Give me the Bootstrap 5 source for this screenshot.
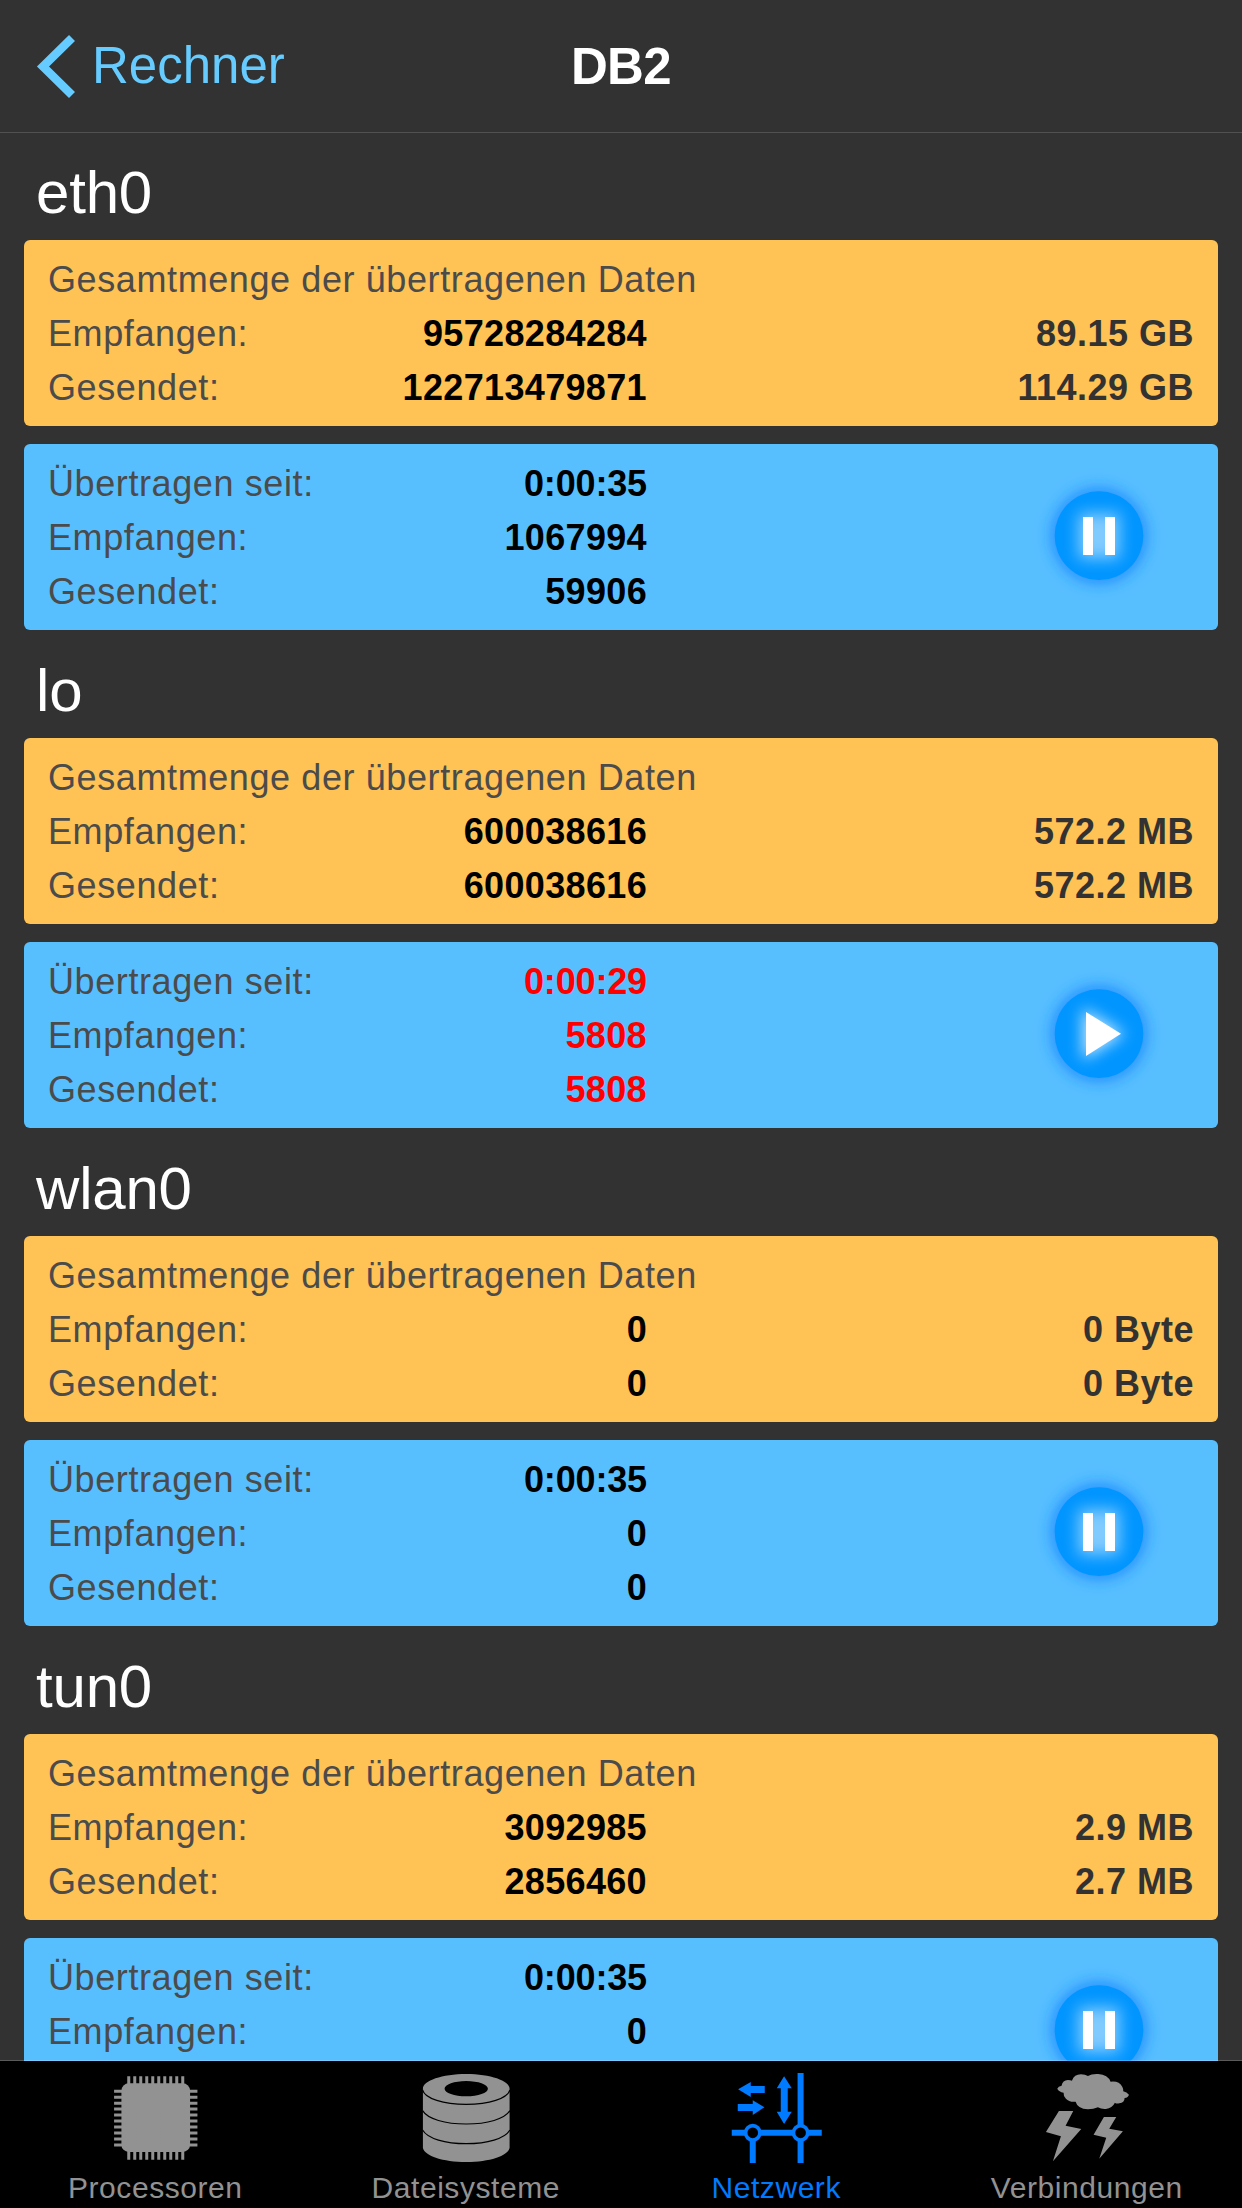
<!DOCTYPE html>
<html lang="de">
<head>
<meta charset="utf-8">
<meta name="viewport" content="width=device-width, initial-scale=1">
<title>DB2 – Netzwerk</title>
<link href="https://cdn.jsdelivr.net/npm/bootstrap@5.3.0/dist/css/bootstrap.min.css" rel="stylesheet">
<style>
html, body { height: 100%; }
body { background: #323232; color: #fff; font-family: "Liberation Sans", Arial, sans-serif; overflow: hidden; }
.topbar { height: 133px; padding: 0 36px; border-bottom: 1px solid #515151; font-size: 51px; line-height: 134px; }
.back-link { color: #66ccff; height: 132px; }
.back-link svg { width: 40px; height: 66px; margin-right: 16px; }
.back-text { letter-spacing: 0; }
.host-name { letter-spacing: -.6px; height: 132px; }
.iface-list { padding: 0 24px; min-height: 0; }
.iface-title { height: 108px; padding: 7px 0 0 12px; font-size: 60px; line-height: 107px; font-weight: 400; letter-spacing: -.2px; }
.iface:first-child .iface-title { height: 107px; padding-top: 6px; }
.panel { height: 186px; padding: 13px 24px 0; border: 0; border-radius: 6px; font-size: 36px; line-height: 54px; color: #4b4b4b; letter-spacing: .6px; }
.panel-total { background: #ffc254; margin-bottom: 18px; }
.panel-since { background: #58bfff; }
.num-col { width: 599px; }
.num-col b { color: #000; letter-spacing: .35px; }
.num-col b.clock { letter-spacing: -.15px; }
.panel .halted b { color: #ff0000; }
.human { color: #323232; font-weight: 700; letter-spacing: .5px; }
.toggle-icon { width: 140px; height: 130px; margin: 13px 24px 0 0; }
.tabs { position: relative; height: 147px; background: #000; box-shadow: 0 -1px 0 rgba(255, 255, 255, .2); color: #929292; font-size: 30px; line-height: 36px; letter-spacing: .55px; }
.tabs svg { width: 120px; height: 104px; display: block; fill: currentColor; }
.tab-active { color: #007aff; }
.tab-label { margin-top: 5px; }
</style>
</head>
<body class="d-flex flex-column">
<svg width="0" height="0" class="position-absolute" aria-hidden="true">
  <defs>
    <filter id="soft" x="-50%" y="-50%" width="200%" height="200%"><feGaussianBlur stdDeviation="24"/></filter>
    <filter id="shine" x="-100%" y="-100%" width="300%" height="300%"><feGaussianBlur stdDeviation="22"/></filter>
    <symbol id="pause" viewBox="0 0 420 390">
      <circle cx="207" cy="197" r="142" fill="#1e8cff" filter="url(#soft)"/>
      <circle cx="207" cy="197" r="133" fill="#0095ff"/>
      <path d="M145 130h124v136H145z" fill="#fff" opacity=".5" filter="url(#shine)"/>
      <path d="M159 141h30v114h-30zM225 141h30v114h-30z" fill="#fff"/>
    </symbol>
    <symbol id="play" viewBox="0 0 420 390">
      <circle cx="207" cy="197" r="142" fill="#1e8cff" filter="url(#soft)"/>
      <circle cx="207" cy="197" r="133" fill="#0095ff"/>
      <path d="M158 120L285 197L158 276z" fill="#fff" opacity=".75" filter="url(#shine)"/>
      <path d="M168 132L273 197L168 264z" fill="#fff"/>
    </symbol>
  </defs>
</svg>

<header class="topbar row g-0 flex-shrink-0">
  <div class="col-4"><a class="back-link d-flex align-items-center text-decoration-none" href="#">
    <svg viewBox="0 0 40 66"><path d="M36 5L7 33.500L36 62" fill="none" stroke="#66ccff" stroke-width="8.500"/></svg>
    <span class="back-text">Rechner</span></a></div>
  <div class="col-4 text-center fw-bold host-name">DB2</div>
</header>

<main class="iface-list flex-grow-1 overflow-hidden">
  <section class="iface">
    <h2 class="iface-title m-0">eth0</h2>
    <div class="panel panel-total">
      <div>Gesamtmenge der übertragenen Daten</div>
      <div class="d-flex justify-content-between"><div class="num-col d-flex justify-content-between"><span>Empfangen:</span><b>95728284284</b></div><span class="human">89.15 GB</span></div>
      <div class="d-flex justify-content-between"><div class="num-col d-flex justify-content-between"><span>Gesendet:</span><b>122713479871</b></div><span class="human">114.29 GB</span></div>
    </div>
    <div class="panel panel-since d-flex justify-content-between align-items-start">
      <div class="num-col">
        <div class="d-flex justify-content-between"><span>Übertragen seit:</span><b class="clock">0:00:35</b></div>
        <div class="d-flex justify-content-between"><span>Empfangen:</span><b>1067994</b></div>
        <div class="d-flex justify-content-between"><span>Gesendet:</span><b>59906</b></div>
      </div>
      <svg class="toggle-icon"><use href="#pause"/></svg>
    </div>
  </section>
  <section class="iface">
    <h2 class="iface-title m-0">lo</h2>
    <div class="panel panel-total">
      <div>Gesamtmenge der übertragenen Daten</div>
      <div class="d-flex justify-content-between"><div class="num-col d-flex justify-content-between"><span>Empfangen:</span><b>600038616</b></div><span class="human">572.2 MB</span></div>
      <div class="d-flex justify-content-between"><div class="num-col d-flex justify-content-between"><span>Gesendet:</span><b>600038616</b></div><span class="human">572.2 MB</span></div>
    </div>
    <div class="panel panel-since d-flex justify-content-between align-items-start">
      <div class="num-col halted">
        <div class="d-flex justify-content-between"><span>Übertragen seit:</span><b class="clock">0:00:29</b></div>
        <div class="d-flex justify-content-between"><span>Empfangen:</span><b>5808</b></div>
        <div class="d-flex justify-content-between"><span>Gesendet:</span><b>5808</b></div>
      </div>
      <svg class="toggle-icon"><use href="#play"/></svg>
    </div>
  </section>
  <section class="iface">
    <h2 class="iface-title m-0">wlan0</h2>
    <div class="panel panel-total">
      <div>Gesamtmenge der übertragenen Daten</div>
      <div class="d-flex justify-content-between"><div class="num-col d-flex justify-content-between"><span>Empfangen:</span><b>0</b></div><span class="human">0 Byte</span></div>
      <div class="d-flex justify-content-between"><div class="num-col d-flex justify-content-between"><span>Gesendet:</span><b>0</b></div><span class="human">0 Byte</span></div>
    </div>
    <div class="panel panel-since d-flex justify-content-between align-items-start">
      <div class="num-col">
        <div class="d-flex justify-content-between"><span>Übertragen seit:</span><b class="clock">0:00:35</b></div>
        <div class="d-flex justify-content-between"><span>Empfangen:</span><b>0</b></div>
        <div class="d-flex justify-content-between"><span>Gesendet:</span><b>0</b></div>
      </div>
      <svg class="toggle-icon"><use href="#pause"/></svg>
    </div>
  </section>
  <section class="iface">
    <h2 class="iface-title m-0">tun0</h2>
    <div class="panel panel-total">
      <div>Gesamtmenge der übertragenen Daten</div>
      <div class="d-flex justify-content-between"><div class="num-col d-flex justify-content-between"><span>Empfangen:</span><b>3092985</b></div><span class="human">2.9 MB</span></div>
      <div class="d-flex justify-content-between"><div class="num-col d-flex justify-content-between"><span>Gesendet:</span><b>2856460</b></div><span class="human">2.7 MB</span></div>
    </div>
    <div class="panel panel-since d-flex justify-content-between align-items-start">
      <div class="num-col">
        <div class="d-flex justify-content-between"><span>Übertragen seit:</span><b class="clock">0:00:35</b></div>
        <div class="d-flex justify-content-between"><span>Empfangen:</span><b>0</b></div>
      </div>
      <svg class="toggle-icon"><use href="#pause"/></svg>
    </div>
  </section>
</main>

<nav class="tabs row g-0 flex-shrink-0 text-center">
  <div class="col-3 d-flex flex-column align-items-center">
    <svg viewBox="15.75 33 360 312">
      <rect x="95" y="100" width="206" height="206" rx="22"/>
      <path d="M117 79V329M135 79V329M153 79V329M171 79V329M189 79V329M207 79V329M225 79V329M243 79V329M261 79V329M279 79V329M73 124H323M73 142H323M73 160H323M73 177H323M73 195H323M73 213H323M73 231H323M73 249H323M73 267H323M73 285H323" fill="none" stroke="currentColor" stroke-width="9"/>
    </svg>
    <span class="tab-label">Processoren</span>
  </div>
  <div class="col-3 d-flex flex-column align-items-center">
    <svg viewBox="17.25 33 360 312">
      <path fill-rule="evenodd" d="M68 116C68 92 126 72 198 72S328 92 328 116V294C322 318 268 336 198 336S74 318 68 294ZM133 116C133 128 162 139 198 139S263 128 263 116S234 93 198 93S133 104 133 116Z"/>
      <path d="M67 120C74 146 130 163 198 163S322 146 329 120M67 182C82 207 135 222 198 222S314 207 329 182M67 240C82 266 135 281 198 281S314 266 329 240" fill="none" stroke="#000" stroke-width="3.500"/>
    </svg>
    <span class="tab-label">Dateisysteme</span>
  </div>
  <div class="col-3 d-flex flex-column align-items-center tab-active">
    <svg viewBox="18.75 33 360 312">
      <path d="M85 118L123 96V108H165V129H123V141ZM164 172L129 151V162H84V183H129V195ZM223 79L246 115H234V185H246L223 222L201 185H213V115H201Z"/>
      <path d="M66 248.500H110M148 248.500H254M291 248.500H336M129 268V339M272.500 268V339M272.500 69V230" fill="none" stroke="currentColor" stroke-width="18"/>
      <g fill="none" stroke="currentColor" stroke-width="11"><circle cx="129" cy="248.500" r="21.500"/><circle cx="272.500" cy="248.500" r="21.500"/></g>
    </svg>
    <span class="tab-label">Netzwerk</span>
  </div>
  <div class="col-3 d-flex flex-column align-items-center">
    <svg viewBox="20.25 33 360 312">
      <path d="M111 116Q114 109 124 107Q127 91 143 90Q151 90 155 92Q162 73 182 73Q195 73 203 78Q214 71 234 72Q263 74 271 95Q297 92 306 110Q310 117 309 124Q320 126 326 134Q324 142 313 144Q313 159 297 160Q288 162 284 158Q276 174 257 177Q243 178 233 172Q220 178 203 178Q172 176 166 155Q147 157 137 146Q129 138 130 128Q116 125 111 116Z"/>
      <path d="M116 183H159L136 227L183 237L98 334L122 259L77 246ZM251 201H288L267 236L308 244L237 326L258 263L220 254Z"/>
    </svg>
    <span class="tab-label">Verbindungen</span>
  </div>
</nav>
<script src="https://cdn.jsdelivr.net/npm/bootstrap@5.3.0/dist/js/bootstrap.bundle.min.js"></script>
</body>
</html>
